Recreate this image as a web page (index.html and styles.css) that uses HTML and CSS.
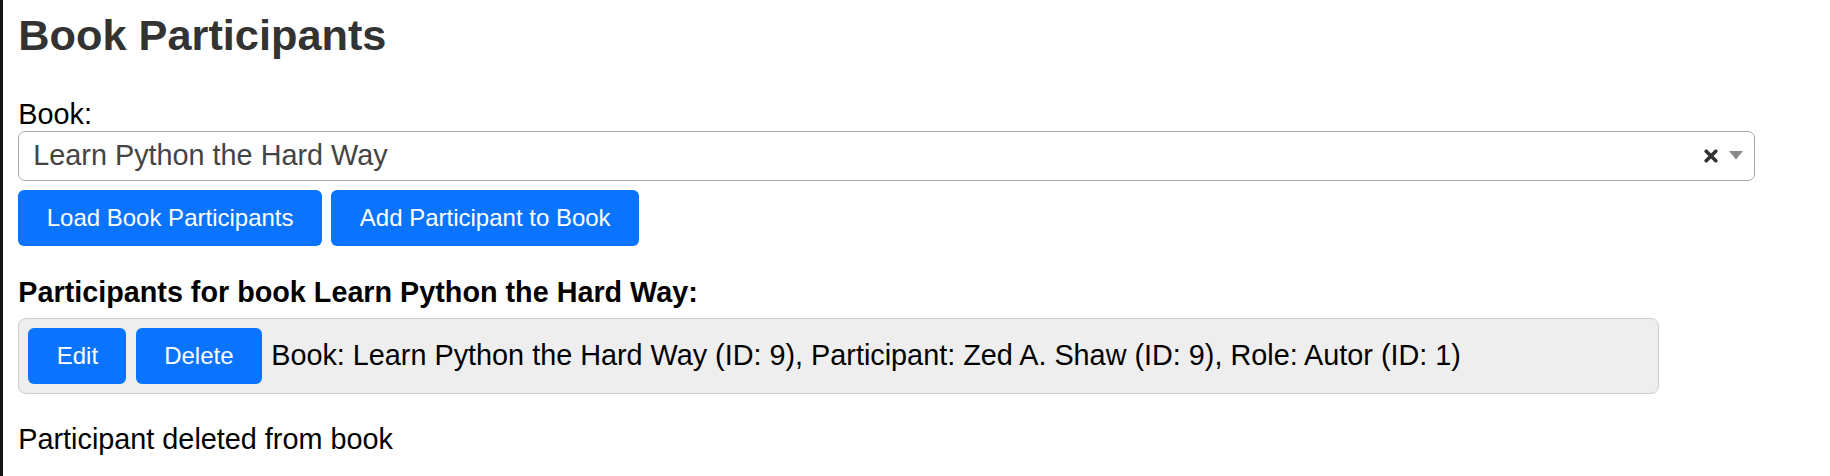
FILE: index.html
```html
<!DOCTYPE html>
<html lang="en">
<head>
<meta charset="utf-8">
<title>Book Participants</title>
<link rel="stylesheet" href="styles.css">
</head>
<body>
<div class="page">
  <h1 class="title">Book Participants</h1>
  <label class="field-label">Book:</label>
  <div class="select">
    <span class="select-value">Learn Python the Hard Way</span>
    <svg class="select-clear" width="14" height="14" viewBox="0 0 14 14" aria-hidden="true">
      <path d="M2.2 2.2 L11.8 11.8 M11.8 2.2 L2.2 11.8" stroke="#333" stroke-width="3.6" stroke-linecap="round" fill="none"/>
    </svg>
    <svg class="select-arrow" width="14" height="9" viewBox="0 0 14 9" aria-hidden="true">
      <polygon points="0,0 14,0 7,8.5" fill="#888"/>
    </svg>
  </div>
  <div class="actions">
    <button class="btn">Load Book Participants</button>
    <button class="btn">Add Participant to Book</button>
  </div>
  <h3 class="subtitle">Participants for book Learn Python the Hard Way:</h3>
  <div class="entry">
    <button class="btn">Edit</button>
    <button class="btn">Delete</button>
    <span class="entry-text">Book: Learn Python the Hard Way (ID: 9), Participant: Zed A. Shaw (ID: 9), Role: Autor (ID: 1)</span>
  </div>
  <p class="status">Participant deleted from book</p>
</div>
</body>
</html>
```

FILE: styles.css
```css
html, body {
  margin: 0;
  padding: 0;
  background: #fff;
}

body {
  border-left: 3px solid #141414;
  min-height: 476px;
  box-sizing: border-box;
  font-family: "Liberation Sans", Arial, Helvetica, sans-serif;
  font-size: 28.8px;
  color: #000;
}

.page {
  padding: 0 0 0 15.3px;
}

.title {
  margin: 10px 0 0;
  font-size: 43.3px;
  line-height: 50px;
  font-weight: bold;
  color: #333;
}

.field-label {
  display: block;
  margin-top: 37.5px;
  line-height: 33px;
}

.select {
  box-sizing: border-box;
  width: 1737px;
  height: 50.3px;
  border: 1px solid #aaa;
  border-radius: 7px;
  background: #fff;
  display: flex;
  align-items: center;
  padding: 0 11px 0 14px;
}

.select-value {
  flex: 1;
  color: #444;
  line-height: 33px;
  white-space: nowrap;
}

.select-clear {
  display: block;
  margin-right: 11px;
}

.select-arrow {
  display: block;
}

.actions {
  display: flex;
  gap: 9.5px;
  margin-top: 9.5px;
}

.btn {
  font-family: "Liberation Sans", Arial, Helvetica, sans-serif;
  font-size: 24px;
  line-height: 28px;
  padding: 14px 28.4px;
  border: none;
  border-radius: 6px;
  background: #0a74ff;
  color: #fff;
  white-space: nowrap;
  cursor: pointer;
}

.subtitle {
  margin: 29.6px 0 0;
  font-size: 28.75px;
  line-height: 33px;
  font-weight: bold;
}

.entry {
  box-sizing: border-box;
  width: 1641px;
  margin-top: 8.7px;
  padding: 9px;
  border: 1px solid #ccc;
  border-radius: 8px;
  background: #eee;
  display: flex;
  align-items: center;
  gap: 9.3px;
}

.entry-text {
  line-height: 33px;
  white-space: nowrap;
}

.status {
  margin: 29.7px 0 0;
  line-height: 33px;
}
```
